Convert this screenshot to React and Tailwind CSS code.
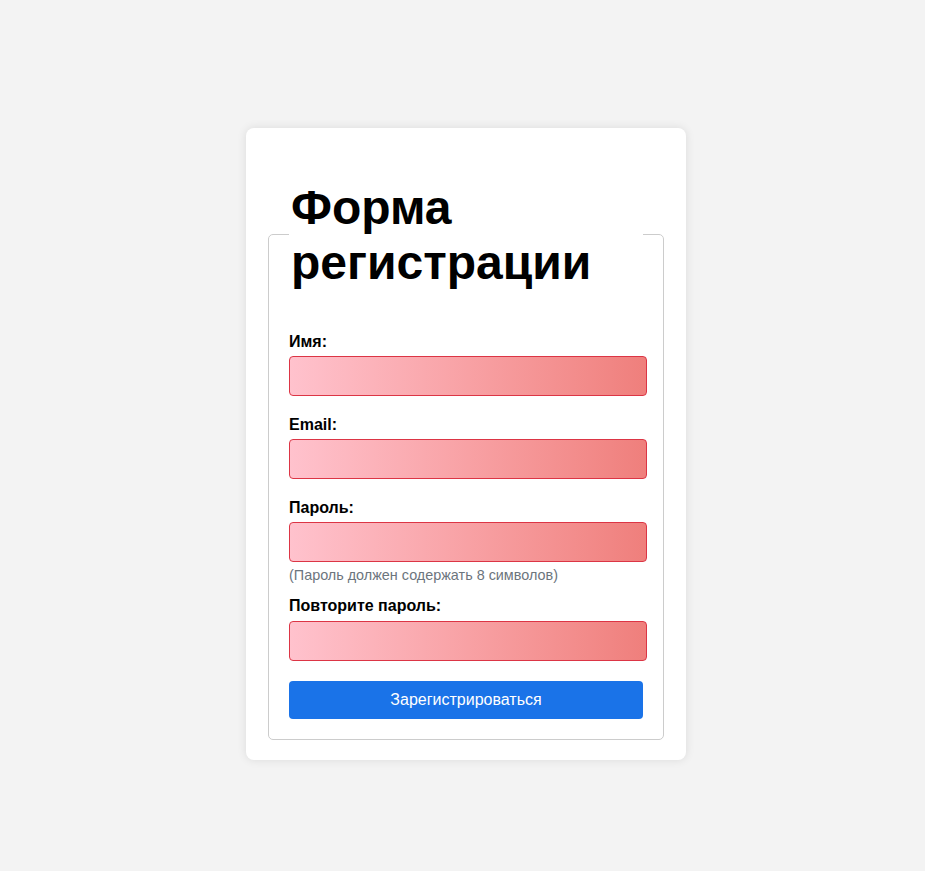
export default function App() {
  const fields = [
    { id: "name", label: "Имя:", type: "text" },
    { id: "email", label: "Email:", type: "email" },
    { id: "password", label: "Пароль:", type: "password", hint: "(Пароль должен содержать 8 символов)" },
    { id: "confirm", label: "Повторите пароль:", type: "password" },
  ];

  return (
    <div
      className="min-h-[871px] bg-[#f3f3f3] flex items-center justify-center pl-[7px] pt-[16px]"
      style={{ fontFamily: "'Liberation Sans', Arial, sans-serif" }}
    >
      <div className="w-[440px] p-5 bg-white rounded-lg shadow-[0_0_10px_rgba(0,0,0,0.1)]">
        <fieldset className="mx-[2px] border border-[#cccccc] rounded-[5px] px-5 pt-[11px] pb-5">
          <legend>
            <h1 className="text-[48px] leading-[55px] font-bold text-black my-[32px] pl-[2px]">Форма регистрации</h1>
          </legend>
          {fields.map((f, i) => (
            <div key={f.id}>
              <label htmlFor={f.id} className="block text-base leading-[18px] font-bold text-black mb-[5.5px]">
                {f.label}
              </label>
              <input
                id={f.id}
                type={f.type}
                className={`block w-[calc(100%+4px)] h-[40px] px-2 border border-[#dc3545] rounded-[4px] bg-gradient-to-r from-[#ffc2cd] to-[#ef7f7c] outline-none ${f.hint ? "mb-[5px]" : i === fields.length - 1 ? "mb-[20px]" : "mb-[19.5px]"}`}
              />
              {f.hint && (
                <p className="text-[14.4px] leading-4 text-[#6c757d] mb-[14px]">{f.hint}</p>
              )}
            </div>
          ))}
          <button
            type="submit"
            className="block w-full h-[38px] rounded-[4px] bg-[#1a73e8] text-white text-base"
          >
            Зарегистрироваться
          </button>
        </fieldset>
      </div>
    </div>
  );
}
